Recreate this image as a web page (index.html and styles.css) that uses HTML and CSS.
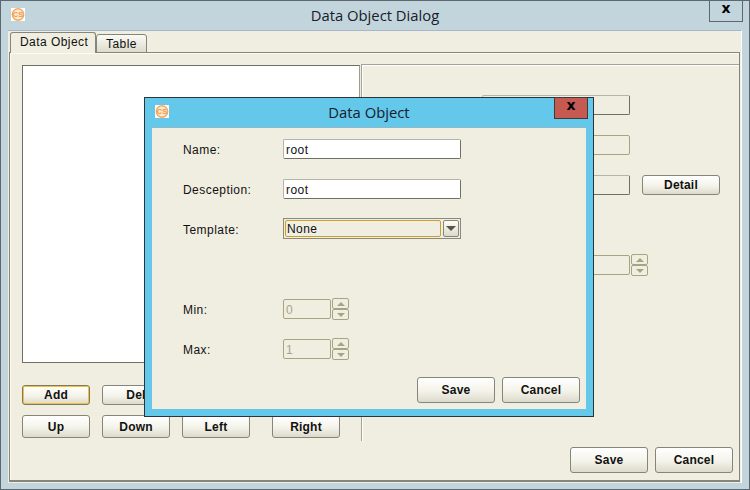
FILE: index.html
```html
<!DOCTYPE html>
<html lang="en">
<head>
    <meta charset="UTF-8">
    <meta name="viewport" content="width=device-width, initial-scale=1.0">
    <title>Data Object Dialog</title>
    <link rel="stylesheet" href="styles.css">
</head>
<body>
    <div class="window">
        <div class="titlebar">
            <svg class="app-icon" viewBox="0 0 14 13">
                <rect width="14" height="13" fill="#fff"/>
                <circle cx="7" cy="6.5" r="5.7" fill="#fde9d2" stroke="#f5a860" stroke-width="1.4"/>
                <text x="7" y="9.3" class="icon-text">CS</text>
            </svg>
            <div class="title">Data Object Dialog</div>
            <div class="close">x</div>
        </div>
        <div class="client">
            <div class="tabs">
                <div class="tab active">Data Object</div>
                <div class="tab">Table</div>
            </div>
            <div class="pane">
                <div class="pane-top">
                    <div class="left">
                        <div class="list"></div>
                        <div class="left-row short">
                            <button class="btn focused">Add</button>
                            <button class="btn">Del</button>
                        </div>
                        <div class="left-row">
                            <button class="btn">Up</button>
                            <button class="btn">Down</button>
                            <button class="btn">Left</button>
                            <button class="btn push">Right</button>
                        </div>
                    </div>
                    <div class="side">
                        <div class="side-row"><div class="field plain"></div></div>
                        <div class="side-row"><div class="field off"></div></div>
                        <div class="side-row">
                            <div class="field plain"></div>
                            <button class="btn detail">Detail</button>
                        </div>
                        <div class="side-row"></div>
                        <div class="side-row">
                            <div class="field off"></div>
                            <div class="spin">
                                <span class="spin-btn"><i class="up"></i></span>
                                <span class="spin-btn"><i class="down"></i></span>
                            </div>
                        </div>
                    </div>
                </div>
                <div class="actions">
                    <button class="btn big">Save</button>
                    <button class="btn big">Cancel</button>
                </div>
            </div>
        </div>
    </div>

    <div class="dialog">
        <div class="titlebar dialog-bar">
            <svg class="app-icon" viewBox="0 0 14 13">
                <rect width="14" height="13" fill="#fff"/>
                <circle cx="7" cy="6.5" r="5.7" fill="#fde9d2" stroke="#f5a860" stroke-width="1.4"/>
                <text x="7" y="9.3" class="icon-text">CS</text>
            </svg>
            <div class="title">Data Object</div>
            <div class="close red">x</div>
        </div>
        <div class="dialog-body">
            <div class="form">
                <label>Name:</label>
                <div class="field text">root</div>
                <label>Desception:</label>
                <div class="field text">root</div>
                <label>Template:</label>
                <div class="combo">
                    <div class="combo-value">None</div>
                    <div class="combo-btn"><i class="down dark"></i></div>
                </div>
                <div class="blank"></div>
                <label>Min:</label>
                <div class="spinner">
                    <div class="field off small">0</div>
                    <div class="spin">
                        <span class="spin-btn"><i class="up"></i></span>
                        <span class="spin-btn"><i class="down"></i></span>
                    </div>
                </div>
                <label>Max:</label>
                <div class="spinner">
                    <div class="field off small">1</div>
                    <div class="spin">
                        <span class="spin-btn"><i class="up"></i></span>
                        <span class="spin-btn"><i class="down"></i></span>
                    </div>
                </div>
            </div>
            <div class="actions dialog-actions">
                <button class="btn big">Save</button>
                <button class="btn big">Cancel</button>
            </div>
        </div>
    </div>
</body>
</html>
```

FILE: styles.css
```css
* {
    box-sizing: border-box;
}
html, body {
    margin: 0;
    width: 750px;
    height: 490px;
    overflow: hidden;
}
body {
    position: relative;
    font-family: "Liberation Sans", Arial, sans-serif;
    font-size: 12px;
    letter-spacing: 0.45px;
    color: #111;
}
.window {
    width: 750px;
    height: 490px;
    background-color: #c3d5dc;
    border: 1px solid #5d6770;
    padding: 0 7px 6px 7px;
    display: flex;
    flex-direction: column;
}

/* title bars */
.titlebar {
    display: grid;
    grid-template-columns: 1fr auto 1fr;
    height: 29px;
    flex: none;
    margin: 0 -1px;
}
.app-icon {
    width: 14px;
    height: 13px;
    margin: 7px 0 0 4px;
}
.icon-text {
    font-family: "Liberation Sans", sans-serif;
    font-size: 7.5px;
    font-weight: 700;
    letter-spacing: 0;
    text-anchor: middle;
    fill: #f09a48;
}
.title {
    font-family: "Open Sans", sans-serif;
    font-size: 14.8px;
    letter-spacing: 0;
    line-height: 28px;
    color: #16202a;
}
.close {
    justify-self: end;
    width: 34px;
    height: 22px;
    margin: -1px 0 0 0;
    border: 1px solid #5d6770;
    font-family: "DejaVu Sans", sans-serif;
    font-weight: 700;
    font-size: 14px;
    letter-spacing: 0;
    line-height: 15px;
    text-align: center;
    color: #000;
}
.close.red {
    background-color: #c45a52;
    border-color: #3d3a3a;
}

/* main client area */
.client {
    flex: 1;
    background-color: #f0eee1;
    border-top: 1px solid #a9b5c8;
    border-right: 1px solid #fff;
    padding: 1px 1px 1px 1px;
    display: flex;
    flex-direction: column;
}
.tabs {
    display: flex;
    align-items: flex-end;
    height: 21px;
    padding-left: 1px;
    margin-bottom: -1px;
}
.tab {
    width: 51px;
    height: 19px;
    padding: 2px 0 0 9px;
    line-height: 15px;
    border: 1px solid #85857a;
    border-radius: 3px 3px 0 0;
    background: linear-gradient(#fbfbf6, #dddbcd);
}
.tab.active {
    width: 86px;
    height: 21px;
    padding-top: 2px;
    background: #f0eee1;
    border-bottom: 0;
    position: relative;
    z-index: 1;
}
.pane {
    flex: 1;
    border: 1px solid #85857a;
    border-bottom-width: 2px;
    box-shadow: inset 1px 1px 0 #fbfbf5;
    display: flex;
    flex-direction: column;
}
.pane-top {
    display: flex;
    height: 388px;
}
.left {
    width: 351px;
    padding: 12px 0 0 12px;
    flex: none;
}
.list {
    width: 338px;
    height: 298px;
    background-color: #fff;
    border: 1px solid #6f6f62;
    border-right-color: #9c9c8e;
    margin-bottom: 22px;
}
.left-row {
    display: flex;
    gap: 12px;
    height: 23px;
}
.left-row.short {
    height: 20px;
    margin-bottom: 10px;
}
.left-row .btn {
    width: 68px;
}
.left-row .push {
    margin-left: 10px;
}
.side {
    flex: 1;
    margin-top: 11px;
    border-top: 1px solid #a3a396;
    border-left: 1px solid #a3a396;
    box-shadow: inset 1px 1px 0 #fff;
    padding: 30px 0 0 120px;
    display: flex;
    flex-direction: column;
    gap: 20px;
}
.side-row {
    display: flex;
    height: 20px;
}

/* controls */
.btn {
    font-family: inherit;
    font-size: 12px;
    font-weight: 700;
    letter-spacing: 0.2px;
    color: #111;
    padding: 0;
    background: linear-gradient(#ffffff, #f4f3ea 55%, #dcdacb);
    border: 1px solid #85857a;
    border-radius: 3px;
}
.btn.focused {
    border-color: #7f7a5a;
    box-shadow: inset 0 0 0 1px #f0c040;
}
.btn.detail {
    width: 78px;
    margin-left: 12px;
}
.btn.big {
    width: 78px;
    height: 26px;
}
.actions {
    display: flex;
    justify-content: flex-end;
    gap: 7px;
    padding: 6px 6px 0 0;
}
.field {
    width: 148px;
    height: 20px;
    border: 1px solid #6f6f62;
    border-top-color: #b4b4a6;
    border-left-color: #b4b4a6;
    border-radius: 2px;
    padding-left: 2px;
    line-height: 20px;
}
.field.off {
    border-color: #a5a583;
    color: #a5a583;
}
.field.small {
    width: 48px;
}
.field.text {
    width: 178px;
    background-color: #fff;
}
.spin {
    width: 17px;
    height: 22px;
    margin: -1px 0 0 1px;
    display: flex;
    flex-direction: column;
}
.spin-btn {
    flex: 1;
    border: 1px solid #a5a583;
    border-radius: 2px;
    display: flex;
    align-items: center;
    justify-content: center;
}
.up, .down {
    width: 0;
    height: 0;
    border-left: 4px solid transparent;
    border-right: 4px solid transparent;
}
.up {
    border-bottom: 4px solid #a5a583;
}
.down {
    border-top: 4px solid #a5a583;
}
.down.dark {
    border-left-width: 5px;
    border-right-width: 5px;
    border-top: 5px solid #55554c;
}

/* dialog window floats over the main one */
.dialog {
    position: absolute;
    left: 144px;
    top: 97px;
    width: 450px;
    height: 320px;
    background-color: #63c8ea;
    border: 1px solid #2b343a;
    padding: 0 7px 7px 7px;
    display: flex;
    flex-direction: column;
}
.dialog-bar .close {
    margin-right: -1px;
}
.dialog-body {
    flex: 1;
    background-color: #f0eee1;
    border-top: 1px solid #8fb8c8;
    padding: 11px 6px 0 31px;
}
.form {
    display: grid;
    grid-template-columns: 100px 178px;
    grid-auto-rows: 20px;
    row-gap: 20px;
}
.form label {
    line-height: 22px;
}
.blank {
    grid-column: 1 / 3;
}
.combo {
    height: 21px;
    margin-top: -1px;
    border: 1px solid #8a8a7c;
    padding: 1px;
    display: flex;
    gap: 2px;
    background-color: #f0eee1;
}
.combo-value {
    flex: 1;
    border: 1px solid #c9a030;
    border-radius: 2px;
    padding-left: 1px;
    line-height: 17px;
}
.combo-btn {
    width: 16px;
    border: 1px solid #85857a;
    border-radius: 2px;
    background: linear-gradient(#fdfdf8, #dcdacb);
    display: flex;
    align-items: center;
    justify-content: center;
}
.spinner {
    display: flex;
}
.dialog-actions {
    padding: 18px 0 0 0;
}
```
